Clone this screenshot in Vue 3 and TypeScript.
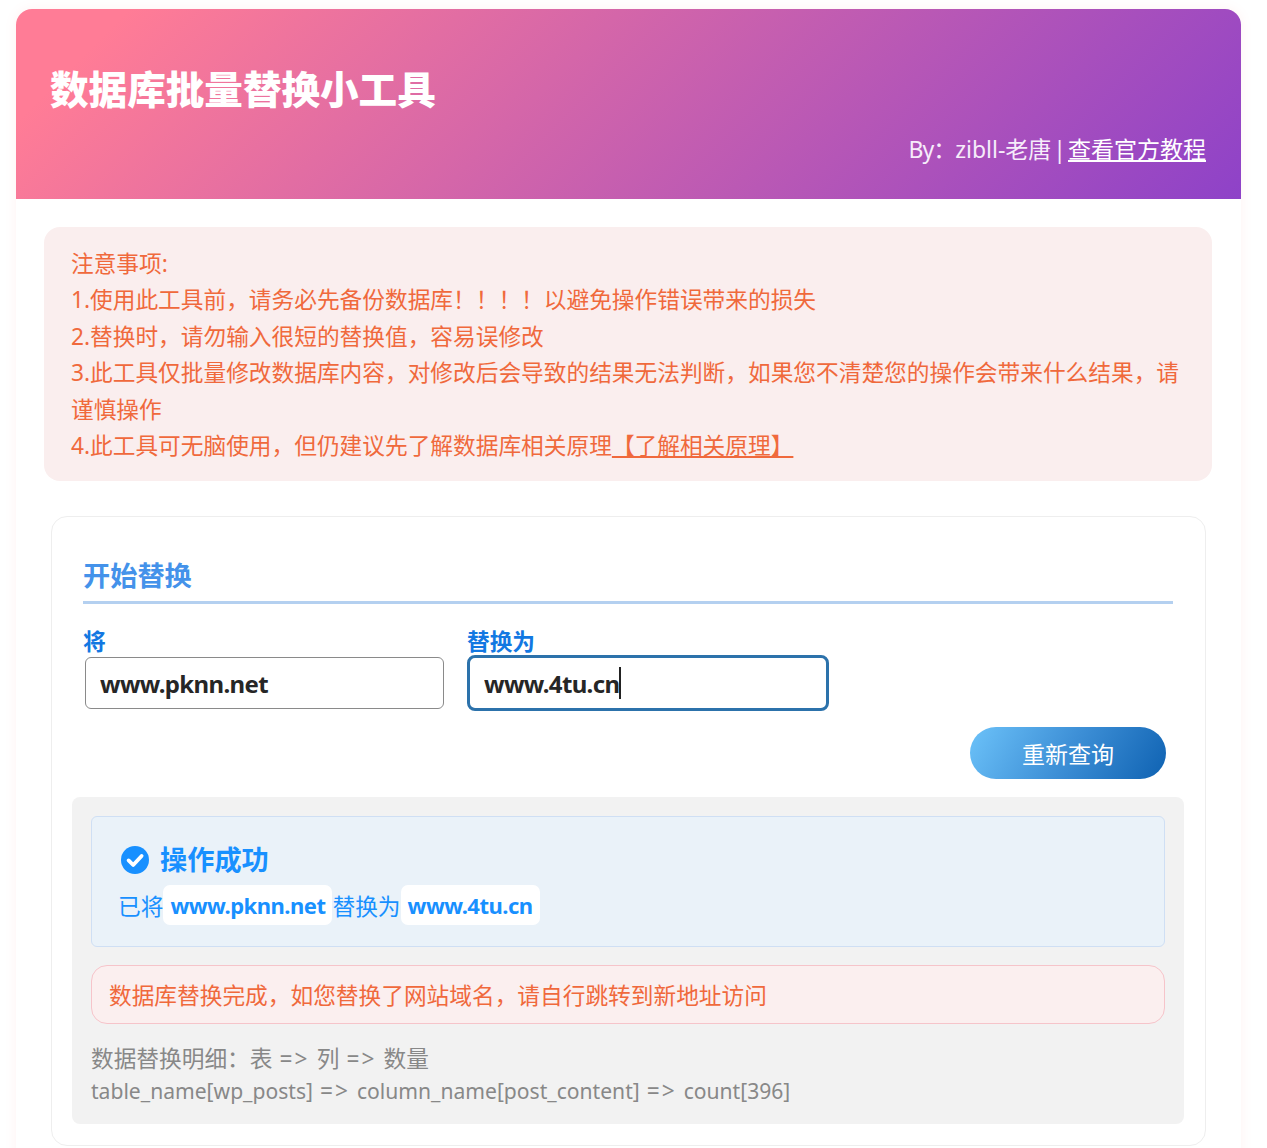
<script setup lang="ts">
const notes: string[] = [
  '注意事项:',
  '1.使用此工具前，请务必先备份数据库！！！！以避免操作错误带来的损失',
  '2.替换时，请勿输入很短的替换值，容易误修改',
  '3.此工具仅批量修改数据库内容，对修改后会导致的结果无法判断，如果您不清楚您的操作会带来什么结果，请谨慎操作',
]
const fromValue = 'www.pknn.net'
const toValue = 'www.4tu.cn'
</script>

<template>
  <div class="page">
    <div class="shell">
      <header class="hero">
        <h1>数据库批量替换小工具</h1>
        <p class="by"><span class="by-label">By：</span>zibll-老唐 | <a href="#">查看官方教程</a></p>
      </header>

      <main class="body">
        <section class="notice">
          <div v-for="n in notes" :key="n">{{ n }}</div>
          <div>4.此工具可无脑使用，但仍建议先了解数据库相关原理<a href="#">【了解相关原理】</a></div>
        </section>

        <section class="card">
          <h2>开始替换</h2>
          <div class="fields">
            <label class="field first">
              <span>将</span>
              <input type="text" :value="fromValue" readonly />
            </label>
            <label class="field second">
              <span>替换为</span>
              <span class="focus-wrap">
                <input type="text" :value="toValue" readonly />
                <i class="caret"></i>
              </span>
            </label>
          </div>
          <div class="actions"><button type="button">重新查询</button></div>

          <div class="panel">
            <div class="success">
              <div class="success-title">
                <svg viewBox="0 0 28 28" width="28" height="28" aria-hidden="true">
                  <circle cx="14" cy="14" r="14" fill="#1890ff" />
                  <path d="M7.6 14.4l4.6 4.6 8.4-9" fill="none" stroke="#fff" stroke-width="3.8" stroke-linecap="round" stroke-linejoin="round" />
                </svg>
                <strong>操作成功</strong>
              </div>
              <div class="success-text">已将<b>{{ fromValue }}</b>替换为<b>{{ toValue }}</b></div>
            </div>
            <div class="alert">数据库替换完成，如您替换了网站域名，请自行跳转到新地址访问</div>
            <div class="details">
              <div class="details-head">数据替换明细：表 <span class="arrow">=&gt;</span> 列 <span class="arrow">=&gt;</span> 数量</div>
              <div class="details-row">table_name[wp_posts] <span class="arrow">=&gt;</span> column_name[post_content] <span class="arrow">=&gt;</span> count[396]</div>
            </div>
          </div>
        </section>
      </main>
    </div>
  </div>
</template>

<style>
html, body { margin: 0; background: #fff; }
</style>

<style scoped>
* { box-sizing: border-box; }
.page {
  height: 100vh;
  overflow: hidden;
  padding: 9px 26px 0 16px;
  font-family: "Noto Sans", "Noto Sans CJK SC", sans-serif;
  font-size: 22.7px;
  background: #fff;
}
.shell {
  background: #fff;
  border-radius: 16px;
  box-shadow: 0 0 12px rgba(255, 130, 130, 0.1);
  height: 1300px;
}
.hero {
  height: 190px;
  padding: 0 35px 0 34px;
  border-radius: 16px 16px 0 0;
  background: linear-gradient(135deg, #ff7c96 8%, #8e42c8 100%);
  color: #fff;
  display: flex;
  flex-direction: column;
}
.hero h1 {
  margin: 57px 0 0;
  font-size: 38.6px;
  line-height: 46px;
  font-weight: 900;
}
.by {
  margin: 21px 0 0;
  text-align: right;
  font-size: 23px;
  line-height: 32px;
  word-spacing: -4px;
  color: #f6ecfa;
}
.by-label { letter-spacing: -1px; }
.by a { color: #fff; text-decoration: underline; }
.body { padding: 28px 29px 0 28px; }
.notice {
  height: 254px;
  padding: 19px 27px;
  border-radius: 16px;
  background: #faeeee;
  color: #f0693c;
  line-height: 36.4px;
}
.notice a { color: #f0693c; text-decoration: underline; }
.card {
  margin: 35px 6px 0 7px;
  padding: 37px 32px 21px 31px;
  border: 1px solid #eeeeee;
  border-radius: 16px;
  background: #fff;
}
h2 {
  margin: 0;
  height: 50px;
  padding-bottom: 3px;
  border-bottom: 3px solid #b4d0f0;
  font-size: 27.2px;
  line-height: 44px;
  font-weight: 700;
  color: #4492ea;
}
.fields {
  margin-top: 23px;
  display: flex;
  gap: 23px;
}
.field {
  display: flex;
  flex-direction: column;
  color: #1278e2;
  font-weight: 700;
  line-height: 30px;
}
.field input {
  display: block;
  font: inherit;
  font-size: 24px;
  letter-spacing: -0.65px;
  font-weight: 700;
  color: #262626;
  background: #fff;
  outline: none;
}
.first input {
  margin-left: 2px;
  width: 359px;
  height: 52px;
  padding: 1px 14px 0;
  border: 1px solid #8a8a8a;
  border-radius: 6px;
}
.focus-wrap {
  position: relative;
  display: block;
  margin-top: -2px;
}
.second input {
  width: 362px;
  height: 56px;
  padding: 1px 14px 0;
  border: 3px solid #2c72ab;
  border-radius: 8px;
}
.caret {
  position: absolute;
  left: 152px;
  top: 12px;
  width: 2px;
  height: 32px;
  background: #222;
}
.actions {
  display: flex;
  justify-content: flex-end;
  margin-top: 16px;
  padding-right: 7px;
}
button {
  width: 196px;
  height: 52px;
  border: 0;
  border-radius: 26px;
  background: linear-gradient(120deg, #6cc2f9 0%, #3d8fd6 50%, #0f62b2 100%);
  color: #fff;
  font: inherit;
  font-size: 23px;
}
.panel {
  margin: 18px -11px 0;
  padding: 19px 19px 17px;
  border-radius: 8px;
  background: #f2f2f2;
}
.success {
  height: 131px;
  padding: 21px 26px 0;
  border: 1px solid #cfdff4;
  border-radius: 6px;
  background: #eaf2f9;
  color: #1890ff;
}
.success-title {
  display: flex;
  align-items: center;
  gap: 11px;
  height: 44px;
  margin-left: 3px;
}
.success-title strong {
  font-size: 27.2px;
  font-weight: 700;
  margin-bottom: 4px;
}
.success-text {
  margin-top: 3px;
  display: flex;
  align-items: center;
  height: 40px;
  font-size: 22.7px;
}
.success-text b {
  display: block;
  height: 40px;
  padding: 0 7px;
  line-height: 40px;
  border-radius: 7px;
  background: #fff;
  font-size: 22px;
  letter-spacing: -0.5px;
  font-weight: 700;
}
.alert {
  margin-top: 18px;
  height: 59px;
  padding: 0 17px;
  display: flex;
  align-items: center;
  border: 1px solid #f6c4ca;
  border-radius: 16px;
  background: #fbefef;
  color: #f0693c;
}
.details {
  margin-top: 19px;
  line-height: 32px;
  color: #888888;
}
.details-head { word-spacing: 1.2px; }
.details-row { font-size: 21.1px; word-spacing: 1.5px; }
.arrow { font-size: 22.7px; letter-spacing: 2px; }
</style>
